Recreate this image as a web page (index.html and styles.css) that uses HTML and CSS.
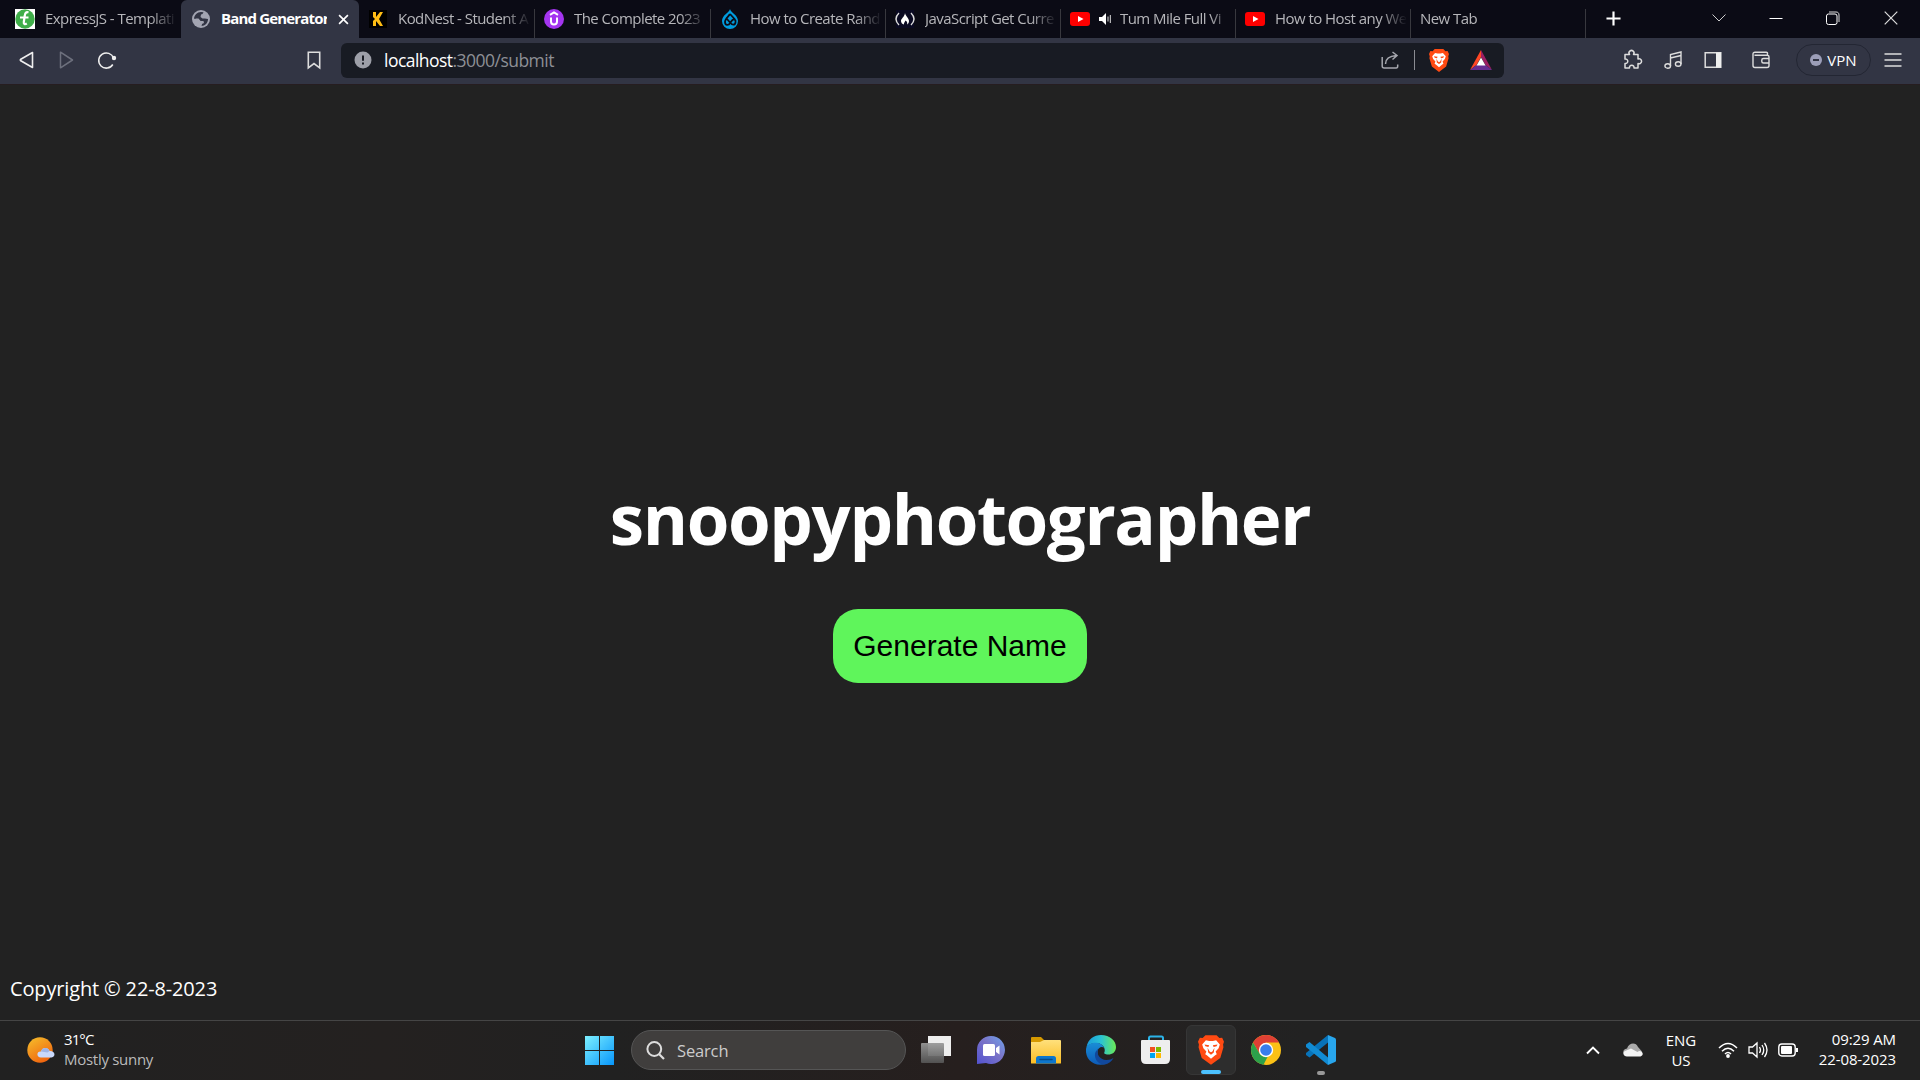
FILE: index.html
```html
<!DOCTYPE html>
<html lang="en">
<head>
<meta charset="utf-8">
<title>Band Generator</title>
<link rel="stylesheet" href="styles.css">
</head>
<body>
<header class="tabs">
  <div class="tab first"><svg class="fav" viewBox="0 0 20 20"><path fill="#fff" d="M0 0h20v20H0z"/><circle cx="10" cy="10" r="9.7" fill="#3fae49"/><path d="M13.500 3.500c-2.500-1-3.500 1-3.700 3l-1 6.500c-.3 2 1 2.700 3 1.500M5 8.500h8.500" stroke="#fff" stroke-width="2.200" fill="none"/></svg><span class="label">ExpressJS - Templati</span></div>
  <div class="tab active"><svg class="globe" viewBox="0 0 18 18"><circle cx="9" cy="9" r="9" fill="#a3a5b2"/><path d="M2 8.500C2.500 5 5 2 9 2l2.500.3L10.500 4 9 4.500 8.500 7l2 1.500h2.300l3.200.5c0 4-3 7-6.500 7l.5-2 2-1-.5-2H8L6 9.500H4z" fill="#323544"/><path d="M4 8.500h2.500L9 11.500l1 1-1 3.500C5 16 2.200 13 2 9.500z" fill="#a3a5b2"/></svg><span class="label">Band Generator</span><svg class="close" viewBox="0 0 12 12"><path d="M1.200 1.200l9.600 9.600m0-9.600l-9.600 9.600" stroke="#fff" stroke-width="1.800"/></svg></div>
  <div class="tab kod"><svg class="fav" viewBox="0 0 20 20"><path d="M1 1h18v18H1z"/><path d="M5 3h3v5l4-5h3l-4 7 4 7h-3l-4-5v5H5v-5l2-2-2-2z" fill="#ffbd14"/></svg><span class="label">KodNest - Student A</span></div>
  <div class="tab udemy"><svg class="fav" viewBox="0 0 20 20"><circle cx="10" cy="10" r="10" fill="#a435f0"/><path d="M6 5.800l4-2.400 4 2.400M7 8.500v4c0 4 6 4 6 0v-4" stroke="#fff" stroke-width="2" fill="none"/></svg><span class="label">The Complete 2023</span></div>
  <div class="tab"><svg class="fav" viewBox="0 0 20 20"><path d="M10 0c1 4 8 6 8 12a8 8 0 0 1-16 0C2 6 9 4 10 0z" fill="#009cde"/><path d="M10 5c-1 2-5 5-5 8 0 4 4 3.500 5 1l2.500-3c2-1.500 3.500 0 3 2.500-.6 3-3.500 2.500-5 .5L7 10M10 5l5 5.500" stroke="#0c0c16" stroke-width="1.800" fill="none"/></svg><span class="label">How to Create Rand</span></div>
  <div class="tab"><svg class="fav" viewBox="0 0 20 20"><path d="M1 1h18v18H1z" fill="#0a0a23"/><path d="M4 4Q-2 10 4 16M16 4q6 6 0 12" fill="none" stroke="#ddd" stroke-width="1.400"/><path d="M10 4c.3 3 4 5 4 8 0 2-1 3-2 3.500.7-1.500 0-3-1.500-4C10 13 8.500 14 9 15.500 7 15 6 13.500 6 12c0-2.500 3.500-4 4-8z" fill="#fff"/></svg><span class="label">JavaScript Get Curre</span></div>
  <div class="tab"><svg class="fav" viewBox="0 0 20 20"><rect y="3" width="20" height="14" rx="3" fill="red"/><path d="M8 7l5.500 3L8 13z" fill="#fff"/></svg><svg class="sound" viewBox="0 0 12 12"><path d="M0 4h3l4-4v12L3 8H0z" fill="#fff"/><path d="M9 3.500v5M11.300 2v8" stroke="#ddd"/></svg><span class="label">Tum Mile Full Vi</span></div>
  <div class="tab"><svg class="fav" viewBox="0 0 20 20"><rect y="3" width="20" height="14" rx="3" fill="red"/><path d="M8 7l5.500 3L8 13z" fill="#fff"/></svg><span class="label">How to Host any We</span></div>
  <div class="tab"><span class="label">New Tab</span></div>
  <svg class="plus" viewBox="0 0 16 16"><path d="M8 .5v15M.5 8h15" stroke="#fff" stroke-width="2.300"/></svg>
  <svg class="win-list" viewBox="0 0 14 14"><path d="M.5 3.500L7 10l6.500-6.500" stroke="#ccc" fill="none"/></svg>
  <svg class="win" viewBox="0 0 14 14"><path d="M.5 7.500h13" stroke="#fff"/></svg>
  <svg class="win" viewBox="0 0 14 14"><rect x=".5" y="3" width="10.500" height="10.500" rx="2" fill="none" stroke="#fff"/><path d="M3 1h7c2 0 3 1 3 3v7" fill="none" stroke="#ddd"/></svg>
  <svg class="win" viewBox="0 0 14 14"><path d="M.7 .7l12.600 12.600m0-12.600L.7 13.300" stroke="#ddd" stroke-width="1.200"/></svg>
</header>
<nav class="toolbar">
  <svg class="nav-i back" viewBox="0 0 18 20"><path d="M14.500 2.500v15L2.800 10.800q-1-.8 0-1.600z" fill="none" stroke="#eee" stroke-width="1.600" stroke-linejoin="round"/></svg>
  <svg class="nav-i fwd" viewBox="0 0 18 20"><path d="M2.500 2.200v15.600L14.500 10z" fill="none" stroke="#6d707d" stroke-width="1.500" stroke-linejoin="round"/></svg>
  <svg class="nav-i reload" viewBox="0 0 18 20"><path d="M15.500 8A7.600 7.600 0 1 0 14.800 14.500" fill="none" stroke="#eee" stroke-width="1.500"/><circle cx="16" cy="8" r="2.200" fill="#eee"/></svg>
  <svg class="bookmark" viewBox="0 0 14 18"><path d="M1.300 1.200h11.400v15.600L7 12.500l-5.700 4.300z" fill="none" stroke="#ddd" stroke-width="1.600"/></svg>
  <div class="address">
    <svg class="info" viewBox="0 0 18 18"><circle cx="9" cy="9" r="8.500" fill="#9d9fa8"/><path d="M9 4.500v5.200M9 11.500v2" stroke="#181b23" stroke-width="2"/></svg>
    <span class="url"><b class="host">localhost</b>:3000/submit</span>
    <svg class="share" viewBox="0 0 18 18"><path d="M1.200 6v9q0 2 2 2h12q1.500 0 1.500-2v-1.500M4.500 13c0-5 4-8 11-8.500M11.500 1l4.500 3.500-4.500 4" fill="none" stroke="#a5a7ae" stroke-width="1.500"/></svg>
    <i class="divide"></i>
    <svg class="brave" viewBox="0 0 28 32"><use href="#lion"/></svg>
    <svg class="bat" viewBox="0 0 22 20"><path d="M11 0v7l-4.500 8L0 20z" fill="#ff4724"/><path d="M11 0l11 20-6.500-5L11 7z" fill="#9e1f63"/><path d="M0 20l6.500-5h9L22 20z" fill="#662d91"/><path d="M11 7.500l4.500 8h-9z" fill="#fff"/></svg>
  </div>
  <div class="actions">
    <svg class="act puzzle" viewBox="0 0 18 18"><path d="M2 3.500h4.500a2.500 2.500 0 1 1 4 0H15v4.500a2.500 2.500 0 1 1 0 4.500V17h-4a2.300 2.300 0 1 0-4.500 0H2v-4.500a2.300 2.300 0 1 0 0-4.500z" fill="none" stroke="#ddd" stroke-width="1.500" stroke-linejoin="round"/></svg>
    <svg class="act" viewBox="0 0 18 18"><path d="M6.500 15V3.500L17 1v12M6.500 7L17 4.500" fill="none" stroke="#ddd" stroke-width="1.400"/><ellipse cx="3.700" cy="15" rx="2.800" ry="2.200" fill="none" stroke="#ddd" stroke-width="1.400"/><ellipse cx="14.200" cy="13" rx="2.800" ry="2.200" fill="none" stroke="#ddd" stroke-width="1.400"/></svg>
    <svg class="act" viewBox="0 0 18 18"><path d="M1.200 1.800h15.600v14.400H1.200z" fill="none" stroke="#ddd" stroke-width="1.500"/><path d="M12 1.500h5v15h-5z" fill="#eee"/></svg>
    <svg class="act wallet" viewBox="0 0 18 18"><path d="M15.500 4V2.500q0-1.200-1.200-1.200H3Q1 1.300 1 3.200v11.300q0 2 2 2h12q2 0 2-2V6q0-1.700-1.700-1.700H2.500M17 7.500h-5.500q-1.700 0-1.700 1.500v1.500q0 1.500 1.700 1.500H17" fill="none" stroke="#ddd" stroke-width="1.400"/></svg>
    <div class="vpn"><i class="vpn-dot"></i><span>VPN</span></div>
    <svg class="act menu" viewBox="0 0 18 18"><path d="M.5 3h17M.5 9h17M.5 15h17" stroke="#ddd" stroke-width="1.500"/></svg>
  </div>
</nav>
<main class="page">
  <section class="hero">
    <h1 class="title">snoopyphotographer</h1>
    <button class="generate">Generate Name</button>
  </section>
  <footer class="copyright">Copyright © 22-8-2023</footer>
</main>
<footer class="taskbar">
  <div class="weather">
    <svg class="sun" viewBox="0 0 30 28"><defs><linearGradient id="sg" x2=".6" y2="1"><stop stop-color="#f5c02c"/><stop offset="1" stop-color="#f0650f"/></linearGradient></defs><circle cx="13" cy="14" r="12.700" fill="url(#sg)"/><path d="M14 21.500c-5-.5-4.500-6.500 0-6 1-4.500 7.500-4.500 8.500-.5 6-.5 6.500 6 2 6.500z" fill="#c9d8fb"/><path d="M14 15.500c1-4.500 7.500-4.500 8.500-.5l-2 1.500z" fill="#9fb5e8"/></svg>
    <div class="lines"><span class="degrees">31°C</span><span class="dim">Mostly sunny</span></div>
  </div>
  <div class="apps">
    <svg class="start" viewBox="0 0 29 29"><defs><linearGradient id="wg" x2="1" y2="1"><stop stop-color="#7df0ff"/><stop offset="1" stop-color="#0796fb"/></linearGradient></defs><path d="M0 0h14v14H0zM15 0h14v14H15zM0 15h14v14H0zM15 15h14v14H15z" fill="url(#wg)"/></svg>
    <div class="search"><svg class="lens" viewBox="0 0 19 19"><circle cx="8.300" cy="8" r="6.900" fill="none" stroke="#ddd" stroke-width="2"/><path d="M13 13l5 5" stroke="#ddd" stroke-width="2.200"/></svg><span>Search</span></div>
    <svg class="app" viewBox="0 0 30 30"><defs><linearGradient id="tg" x2="0" y2="1"><stop stop-color="#999"/><stop offset="1" stop-color="#555"/></linearGradient></defs><path d="M7 1h23v20H7z" fill="#eee"/><rect y="8" width="23" height="20" rx="1" fill="url(#tg)" opacity=".93"/></svg>
    <svg class="app" viewBox="0 0 30 30"><defs><linearGradient id="cg" x1="1" x2="0" y2="1"><stop stop-color="#6ea4ee"/><stop offset=".45" stop-color="#7b74c8"/><stop offset="1" stop-color="#5252d0"/></linearGradient></defs><path d="M15 1a14 14 0 1 1-5 27.100L1 29V15A14 14 0 0 1 15 1z" fill="url(#cg)"/><rect x="7" y="9" width="12" height="12" rx="1.500" fill="#fff"/><path d="M20 13l3.500-2.500v9L20 17z" fill="#fff"/></svg>
    <svg class="app" viewBox="0 0 30 30"><defs><linearGradient id="fg" x2="0" y2="1"><stop stop-color="#ffe07c"/><stop offset="1" stop-color="#fbbd24"/></linearGradient></defs><path d="M0 3q0-1 1-1h9l3 3v5H0z" fill="#d69900"/><path d="M0 7h9l4-2h16q1 0 1 1v22q0 .5-.5.5H.5Q0 28.500 0 28z" fill="url(#fg)"/><path d="M5 28.500v-5q0-2.500 2.500-2.500h15q2.500 0 2.500 2.500v5z" fill="#0d76cc"/><path d="M9 24.500h12" stroke="#084b88" stroke-width="1.500" stroke-linecap="round"/></svg>
    <svg class="app" viewBox="0 0 30 30"><defs><linearGradient id="eg"><stop stop-color="#199bdc"/><stop offset=".5" stop-color="#2bc3d2"/><stop offset="1" stop-color="#6bea56"/></linearGradient><linearGradient id="eb" x2="0" y2="1"><stop stop-color="#198dd6"/><stop offset="1" stop-color="#0d5bb8"/></linearGradient></defs><path d="M.5 12C2 4 8 0 15 0c9 0 15 6 15 12 0 5-3.500 7.500-8 7.500-3 0-4.500-1-3.500-2.500C20 13 16 7 9 8 5 8.500 2 10 .5 12z" fill="url(#eg)"/><path d="M.5 12C3 7.500 15 5 18 13c-2-2-6-.5-6.500 3.500C11 22 16 29.500 21 28.500 9 33-1 25 0 14z" fill="url(#eb)"/><path d="M12.500 13c-3 5 1 12 8 12 3 0 5-1 7-2-1.500 3-5 6-9 6.500-8 0-11-8-9-12.500z" fill="#11489c"/></svg>
    <svg class="app" viewBox="0 0 30 30"><path d="M8 6V3q0-1.500 1.500-1.500h11Q22 1.500 22 3v3" fill="none" stroke="#2bb3e8" stroke-width="2"/><path d="M0 6q0-1 1-1h27q1 0 1 1v18q0 5-5 5H5q-5 0-5-5z" fill="#eee"/><path d="M9 12h5v5H9z" fill="#f25022"/><path d="M15 12h5v5h-5z" fill="#7fba00"/><path d="M9 18h5v5H9z" fill="#00a4ef"/><path d="M15 18h5v5h-5z" fill="#ffb900"/></svg>
    <div class="running"><svg viewBox="0 0 28 32"><g id="lion"><path d="M8 0h12l3 3 3-.3 2 4.300-1 3 .4 3-3.400 11.500L14 32 4 24.500.6 13 1 10 0 7l2-4.300L5 3z" fill="#ff4a12"/><path d="M8.500 5.500L12 6.200h4l3.500-.7 4 4.500-1.300 4-3.200 3.500 1.200 3.200-1.700 1L14 25.500 9.500 21.700l-1.700-1L9 17.500 5.800 14 4.500 10z" fill="#fff"/><path d="M7 10l5 .8-.8 1.900-3.200-.7zM21 10l-5 .8.800 1.900 3.200-.7zM10.300 13.500l2.200 4 1.500.8 1.500-.8 2.200-4-.7 5.200L14 21l-3-2.300z" fill="#ff4a12"/></g></svg><i class="underline"></i></div>
    <svg class="app" viewBox="0 0 30 30"><circle cx="15" cy="15" r="15" fill="#fbc116"/><path d="M2 7.500A15 15 0 0 1 28 7.500H15l-6.500 11z" fill="#df4034"/><path d="M2 7.500l6.500 11q3 4 8 3.500l-4 7.800A15 15 0 0 1 2 7.500z" fill="#2da14b"/><circle cx="15" cy="15" r="7.200" fill="#fff"/><circle cx="15" cy="15" r="5.800" fill="#397dec"/></svg>
    <div class="code"><svg viewBox="0 0 30 30"><path d="M22 0v7.500L3.500 22.500 0 20v-2z" fill="#0873b9"/><path d="M22 30v-7.500L3.500 7 0 9.500V12z" fill="#118bd3"/><path d="M22 0l7 3q1 .5 1 1.500v21q0 1-1 1.500l-7 3z" fill="#28a6ed"/></svg><i class="dot"></i></div>
  </div>
  <div class="tray">
    <svg class="up" viewBox="0 0 14 10"><path d="M1 8.500l6-6 6 6" fill="none" stroke="#fff" stroke-width="1.900"/></svg>
    <svg class="cloud" viewBox="0 0 20 14"><path d="M4 13C-1 12-1 6 4 5.500 6-.5 13-1 15 4l4 4.500z" fill="#aaa"/><path d="M4 13.500C0 13.500-.5 9 2 8l6-2.500L14.500 9q1.500-1.500 4-.5 3 3-1 5z" fill="#f4f4f4"/></svg>
    <div class="lang"><span>ENG</span><span>US</span></div>
    <svg class="net" viewBox="0 0 20 18"><path d="M1 7q9-9 18 0M4 10.200q6-6 12 0M7 13q3-3 6 0" fill="none" stroke="#fff" stroke-width="1.500"/><circle cx="10" cy="15" r="1.900" fill="#fff"/></svg>
    <svg class="net" viewBox="0 0 20 18"><path d="M1 6h3.500L9 2v14l-4.500-4H1zM11.500 6q2 3 0 6M14 4q3.500 5 0 10M16.500 2q5 7 0 14" fill="none" stroke="#fff" stroke-width="1.300"/></svg>
    <svg class="net" viewBox="0 0 20 18"><rect x=".8" y="3" width="16.400" height="12" rx="3" fill="none" stroke="#fff" stroke-width="1.400"/><rect x="3" y="5" width="11" height="8" rx="1" fill="#fff"/><path d="M18 7h2v4h-2z" fill="#fff"/></svg>
    <div class="clock"><span>09:29 AM</span><span>22-08-2023</span></div>
  </div>
</footer>
</body>
</html>
```
FILE: styles.css
```css
* { box-sizing: border-box; }
body {
  margin: 0;
  width: 1920px;
  height: 1080px;
  overflow: hidden;
  display: flex;
  flex-direction: column;
  background: #222;
  color: #fff;
  font-family: "Open Sans", "Noto Sans", sans-serif;
}
svg { display: block; flex: none; overflow: visible; }

/* Tab strip */
.tabs { height: 38px; display: flex; background: #0b0b15; flex: none; }
.tab {
  width: 175px;
  padding: 0 4px 0 9px;
  display: flex;
  align-items: center;
  gap: 10px;
  font-size: 15px;
  color: #b6b6ba;
  background: linear-gradient(#38383e, #38383e) right bottom / 1px 29px no-repeat;
  flex: none;
}
.label {
  flex: 1;
  padding-bottom: 2px;
  overflow: hidden;
  white-space: nowrap;
  letter-spacing: -0.55px;
  -webkit-mask-image: linear-gradient(90deg, #000 80%, transparent);
  mask-image: linear-gradient(90deg, #000 80%, transparent);
}
.tab.first { width: 181px; padding: 0 4px 0 15px; background: none; }
.tab.active {
  width: 178px;
  padding: 0 10px 0 11px;
  gap: 11px;
  background: #323544;
  border-radius: 6px 6px 0 0;
  color: #fff;
  font-weight: 700;
}
.active .label { mask-image: none; -webkit-mask-image: none; letter-spacing: -0.83px; }
.tab.kod { width: 176px; }
.tab.udemy { width: 176px; }
.fav { width: 20px; height: 20px; }
.globe { width: 18px; height: 18px; }
.close { width: 11px; height: 11px; }
.sound { width: 12px; height: 12px; margin: 0 -1px; }
.plus { width: 15px; height: 15px; margin: 11px 0 0 20px; }
.win-list { width: 14px; height: 14px; margin: 11px 0 0 91px; }
.win { width: 14px; height: 14px; margin: 11px 0 0 43px; }
.win:last-child { margin-left: 44px; }

/* Toolbar */
.toolbar { height: 46px; display: flex; align-items: center; background: #323544; flex: none; padding: 0 18px 2px 18px; }
.nav-i { width: 18px; height: 20px; }
.fwd { margin-left: 22px; }
.reload { margin-left: 22px; }
.bookmark { width: 14px; height: 18px; margin-left: 191px; }
.address {
  width: 1163px;
  height: 35px;
  margin-left: 20px;
  padding: 0 12px 0 13px;
  display: flex;
  align-items: center;
  border-radius: 6px;
  background: #181b23;
}
.info { width: 18px; height: 18px; }
.url { flex: 1; margin-left: 12px; font-size: 17.5px; letter-spacing: -0.53px; color: #8d8f95; }
.host { font-weight: 400; color: #fff; }
.share { width: 18px; height: 18px; }
.divide { width: 1px; height: 20px; margin: 0 14px 0 15px; background: #8a8c92; }
.brave { width: 20px; height: 23px; }
.bat { width: 22px; height: 20px; margin-left: 21px; }
.actions { display: flex; align-items: center; margin-left: auto; }
.act { width: 18px; height: 18px; margin-right: 22px; }
.puzzle { margin-right: 23px; }
.wallet { margin-left: 8px; margin-right: 26px; }
.vpn {
  width: 75px;
  height: 32px;
  display: flex;
  align-items: center;
  justify-content: center;
  gap: 5px;
  padding-bottom: 1px;
  border: 1px solid #232633;
  border-radius: 16px;
  font-size: 15px;
}
.vpn-dot { width: 12px; height: 12px; border-radius: 50%; background: linear-gradient(#323544, #323544) center / 6px 2px no-repeat #9c9eb8; }
.menu { margin: 0 0 0 13px; }

/* Page */
.page { flex: 1; display: flex; flex-direction: column; border-top: 1px solid #261d20; }
.hero { flex: 1; display: flex; flex-direction: column; align-items: center; padding-top: 381px; }
.title { margin: 0; height: 104px; line-height: 105px; font-size: 69px; font-weight: 700; letter-spacing: -1.4px; }
.generate {
  width: 254px;
  height: 74px;
  margin-top: 39px;
  padding: 0;
  border: 0;
  border-radius: 25px;
  background: #5ff55b;
  color: #000;
  font: 30px "Liberation Sans", Arial, sans-serif;
}
.copyright { height: 61px; padding-left: 10px; font-size: 20px; line-height: 60px; letter-spacing: -0.15px; }

/* Taskbar */
.taskbar {
  height: 60px;
  flex: none;
  display: grid;
  grid-template-columns: 585px 1fr 334px;
  align-items: center;
  padding-bottom: 1px;
  border-top: 1px solid #454545;
  background: linear-gradient(90deg, #212121, #242120 20%, #212121 32%, #261f1e 50%, #222 68%);
  font-size: 15px;
}
.weather { display: flex; align-items: center; gap: 7px; padding-left: 27px; }
.sun { width: 30px; height: 28px; }
.lines, .lang, .clock { display: flex; flex-direction: column; line-height: 20px; padding-bottom: 3px; }
.lines { letter-spacing: -0.28px; }
.degrees { letter-spacing: -0.9px; }
.dim { color: #bbb; }
.apps { display: flex; align-items: center; }
.start { width: 29px; height: 29px; }
.search {
  width: 275px;
  height: 40px;
  margin: 0 15px 0 17px;
  padding-left: 14px;
  display: flex;
  align-items: center;
  gap: 12px;
  border: 1px solid #555;
  border-radius: 20px;
  background: #403e3d;
  color: #ccc;
  font-size: 16.5px;
  letter-spacing: -0.15px;
}
.lens { width: 19px; height: 19px; }
.app { width: 30px; height: 30px; margin-right: 25px; }
.running, .code { position: relative; display: flex; align-items: center; justify-content: center; height: 50px; }
.running { width: 50px; margin: 0 15px 0 -10px; border: 1px solid #363636; border-radius: 6px; background: #2d2d2d; }
.running svg { width: 26px; height: 30px; }
.code { width: 30px; }
.code svg { width: 30px; height: 30px; }
.underline, .dot { position: absolute; bottom: 0; height: 4px; border-radius: 2px; }
.underline { width: 20px; background: #4cc2ff; }
.dot { width: 8px; background: #999; }
.tray { display: flex; align-items: center; }
.up { width: 14px; height: 10px; }
.cloud { width: 20px; height: 14px; margin-left: 23px; }
.lang { width: 30px; margin: 0 22px 0 23px; padding-bottom: 1px; align-items: center; }
.net { width: 20px; height: 18px; margin-right: 10px; }
.clock { margin-left: auto; padding-right: 24px; text-align: right; white-space: nowrap; letter-spacing: -0.1px; }
```
